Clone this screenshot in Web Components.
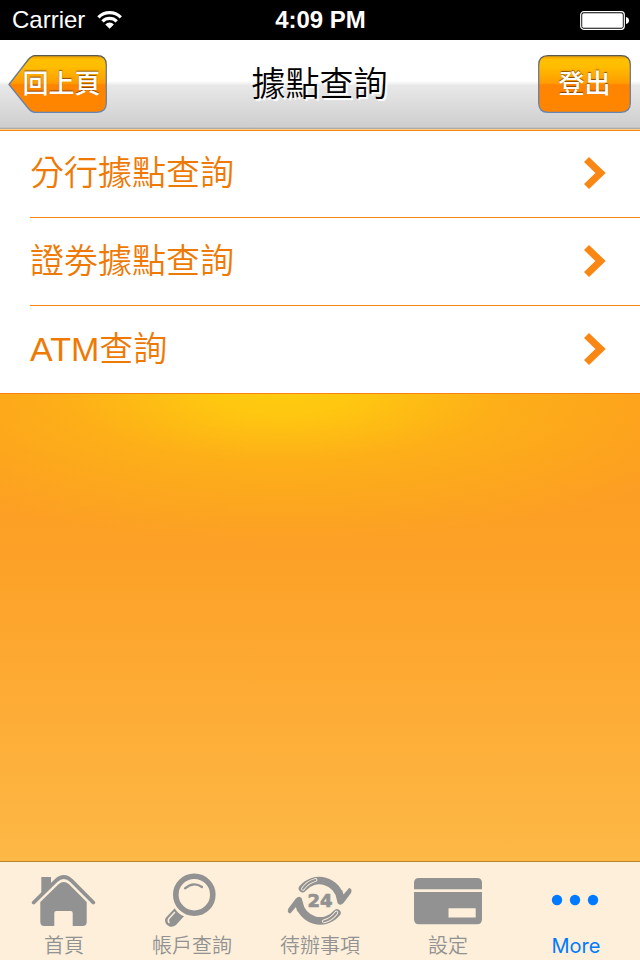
<!DOCTYPE html>
<html lang="zh-Hant">
<head>
<meta charset="utf-8">
<meta name="viewport" content="width=device-width, initial-scale=1">
<title>據點查詢</title>
<style>
  html, body { height: 100%; margin: 0; }
  body {
    --accent: #f78310;
    --accent-text: #ee7a05;
    --tab-bg: #fdefda;
    --tab-ink: #929292;
    --tab-active: #007aff;
    font-family: 'Liberation Sans', 'Noto Sans CJK TC', sans-serif;
    font-weight: 350;
  }
</style>
</head>
<body>

<bank-screen>
  <status-bar slot="top" carrier="Carrier" time="4:09 PM"></status-bar>
  <nav-header slot="top">
    <nav-button slot="left" shape="back">回上頁</nav-button>
    據點查詢
    <nav-button slot="right">登出</nav-button>
  </nav-header>
  <menu-list>
    <menu-row href="#branch">分行據點查詢</menu-row>
    <menu-row href="#securities">證劵據點查詢</menu-row>
    <menu-row href="#atm">ATM查詢</menu-row>
  </menu-list>
  <tab-bar slot="bottom">
    <tab-item icon="home" href="#home">首頁</tab-item>
    <tab-item icon="search" href="#accounts">帳戶查詢</tab-item>
    <tab-item icon="todo" href="#todo">待辦事項</tab-item>
    <tab-item icon="card" href="#settings">設定</tab-item>
    <tab-item icon="more" href="#more" active>More</tab-item>
  </tab-bar>
</bank-screen>

<script>
/** <bank-screen>: bars at the top and bottom, content over the orange backdrop */
class BankScreen extends HTMLElement {
  constructor() {
    super();
    this.attachShadow({ mode: 'open' }).innerHTML = `
      <style>
        :host { display: flex; flex-direction: column; min-height: 100%; }
        main { flex: 1; display: flex; flex-direction: column; }
        .backdrop {
          flex: 1;
          background:
            radial-gradient(ellipse 75% 150px at 44% 0, #ffca10 0, #ffc710 14%, rgba(253,180,22,0.8) 45%, rgba(253,160,30,0) 100%),
            linear-gradient(#fd991f 0, #fca026 32%, #fda62e 50%, #fdb845 100%);
        }
      </style>
      <slot name="top"></slot>
      <main><slot></slot><div class="backdrop"></div></main>
      <slot name="bottom"></slot>
    `;
  }
}

/** <status-bar carrier time> */
class StatusBar extends HTMLElement {
  constructor() {
    super();
    this.attachShadow({ mode: 'open' });
  }

  connectedCallback() {
    this.shadowRoot.innerHTML = `
      <style>
        :host {
          display: grid; grid-template-columns: 1fr auto 1fr; align-items: center;
          height: 40px; padding: 0 11px 0 12px;
          background: #000; color: #fff; font-size: 24px; line-height: 40px;
        }
        .left { display: flex; align-items: center; gap: 12px; }
        .time { font-weight: 700; }
        .battery { justify-self: end; }
        svg { display: block; }
      </style>
      <div class="left">
        <span>${this.getAttribute('carrier')}</span>
        <svg width="26" height="20" viewBox="0 0 26 20" aria-hidden="true">
          <g fill="none" stroke="#fff" stroke-width="3.2">
            <path d="M1.4 7.3A15.8 15.8 0 0 1 23.8 7.3"/>
            <path d="M5.5 11.4A10 10 0 0 1 19.7 11.4"/>
          </g>
          <path d="M8.3 14.4A6 6 0 0 1 16.9 14.4L12.6 18.8Z" fill="#fff"/>
        </svg>
      </div>
      <span class="time">${this.getAttribute('time')}</span>
      <svg class="battery" width="49" height="20" viewBox="0 0 49 20" aria-hidden="true">
        <rect x=".7" y="1.7" width="43.6" height="17.6" rx="3" fill="none" stroke="#fff" stroke-width="1.2"/>
        <rect x="2.2" y="3.2" width="40.6" height="14.6" rx="1.5" fill="#fff"/>
        <path d="M46 7Q49 7.800 49 10.500T46 14Z" fill="#fff"/>
      </svg>
    `;
  }
}

/** <nav-header>: title in the default slot, buttons in left and right */
class NavHeader extends HTMLElement {
  constructor() {
    super();
    this.attachShadow({ mode: 'open' }).innerHTML = `
      <style>
        :host {
          display: grid; grid-template-columns: 1fr auto 1fr; align-items: center;
          position: relative; box-sizing: border-box; height: 90px; padding: 0 9px 2px 8px;
          border-bottom: 1px solid #ffd08a;
          background: linear-gradient(#fff 46%, #e8e8e8 51%, #cecece 98%, #aaa 99%);
          box-shadow: 0 1px var(--accent);
        }
        h1 {
          margin: 0; font-size: 34px; font-weight: inherit; line-height: 50px;
          color: #000; text-shadow: 2px 2px 1px #fff;
        }
        .right { justify-self: end; }
      </style>
      <div><slot name="left"></slot></div>
      <h1><slot></slot></h1>
      <div class="right"><slot name="right"></slot></div>
    `;
  }
}

/** <nav-button shape="back">: glossy orange button, optionally with an arrow edge */
class NavButton extends HTMLElement {
  constructor() {
    super();
    this.attachShadow({ mode: 'open' });
  }

  connectedCallback() {
    const back = this.getAttribute('shape') === 'back';
    const width = back ? 99 : 93;
    const outline = back
      ? 'M1 29.500L20 5Q23.500 .7 27 .7H89Q98.300 .7 98.300 10V48Q98.300 57.300 89 57.300H27Q23.500 57.300 20 53Z'
      : 'M10 .7H83Q92.300 .7 92.300 10V48Q92.300 57.300 83 57.300H10Q.7 57.300 .7 48V10Q.7 .7 10 .7Z';

    this.shadowRoot.innerHTML = `
      <style>
        :host { display: block; }
        button {
          display: grid; place-items: center; padding: 0; border: 0; background: none;
          color: #fff; font: inherit; font-size: 26px; font-weight: 500; line-height: 58px;
          text-shadow: 0 -1px 1px rgba(90,40,0,0.7); cursor: pointer;
        }
        svg, span { grid-area: 1 / 1; }
        svg { display: block; }
        .back span { padding-left: 8px; }
      </style>
      <button type="button" class="${back ? 'back' : ''}">
        <svg width="${width}" height="58" viewBox="0 0 ${width} 58" aria-hidden="true">
          <defs>
            <linearGradient id="fill" x2="0" y2="1">
              <stop offset="0" stop-color="#e89a00"/>
              <stop offset=".07" stop-color="#ffc000"/>
              <stop offset=".2" stop-color="#ffbc00"/>
              <stop offset=".5" stop-color="#ff9a00"/>
              <stop offset=".51" stop-color="#ff8500"/>
              <stop offset="1" stop-color="#ff8500"/>
            </linearGradient>
            <linearGradient id="edge" x2="0" y2="1">
              <stop offset="0" stop-color="#5c5850"/>
              <stop offset=".2" stop-color="#6d7888"/>
              <stop offset="1" stop-color="#6484b4"/>
            </linearGradient>
          </defs>
          <path d="${outline}" fill="url(#fill)" stroke="url(#edge)" stroke-width="1.3"/>
        </svg>
        <span><slot></slot></span>
      </button>
    `;
  }
}

/** <menu-list>: wraps <menu-row> items */
class MenuList extends HTMLElement {
  constructor() {
    super();
    this.attachShadow({ mode: 'open' }).innerHTML = `
      <style>
        :host { display: block; background: #fff; border-bottom: 1px solid var(--accent); }
      </style>
      <nav><slot></slot></nav>
    `;
  }
}

/** <menu-row href> */
class MenuRow extends HTMLElement {
  constructor() {
    super();
    this.attachShadow({ mode: 'open' });
  }

  connectedCallback() {
    this.shadowRoot.innerHTML = `
      <style>
        :host { display: block; padding-left: 30px; }
        a {
          display: flex; align-items: center; justify-content: space-between;
          box-sizing: border-box; height: 88px; padding: 0 34px 2px 0;
          border-bottom: 1px solid var(--accent);
          color: var(--accent-text); font-size: 34px; line-height: 50px; text-decoration: none;
        }
        :host(:last-child) a { height: 87px; border-bottom: 0; }
        svg { display: block; }
      </style>
      <a href="${this.getAttribute('href')}">
        <slot></slot>
        <svg width="22" height="34" viewBox="0 0 22 34" aria-hidden="true">
          <path d="M2.500 3.500L16.500 17L2.500 30.500" fill="none" stroke="#fa8614" stroke-width="7.200"/>
        </svg>
      </a>
    `;
  }
}

/** <tab-bar>: equal columns of <tab-item> */
class TabBar extends HTMLElement {
  constructor() {
    super();
    this.attachShadow({ mode: 'open' }).innerHTML = `
      <style>
        :host { display: block; border-top: 1px solid #b8842e; background: var(--tab-bg); }
        nav { display: grid; grid-auto-flow: column; grid-auto-columns: 1fr; }
      </style>
      <nav><slot></slot></nav>
    `;
  }
}

const ICONS = {
  home: `
    <path d="M9.700 30.500L32 8.700Q40 1.500 47.500 8.700L69.300 30.500" fill="none" stroke="currentColor" stroke-width="3.800" stroke-linecap="round"/>
    <path d="M17.300 5H27V13L17.300 22.500Z"/>
    <path d="M16.300 30L34.500 12.300Q39.700 7.500 45 12.300L62.700 30V50Q62.700 54 58.700 54H48.700V41Q48.700 39 46.700 39H32.300Q30.300 39 30.300 41V54H20.300Q16.300 54 16.300 50Z"/>`,
  search: `
    <circle cx="42.300" cy="22.700" r="18.500" fill="none" stroke="currentColor" stroke-width="5.600"/>
    <path d="M33 16.300Q41.500 9 50 15" fill="none" stroke="currentColor" stroke-width="2.200" stroke-linecap="round"/>
    <path d="M22.700 36.300Q26 42 32 44.300L24 53Q21 55.500 17.500 54.500Q13 52.500 13 48Q13 46.500 14.500 45Z"/>
    <path d="M22.500 40.500L17 46.500Q15.500 48.300 17 50.500" fill="none" stroke="var(--tab-bg)" stroke-width="1.500" stroke-linecap="round"/>`,
  todo: `
    <g id="half">
      <path d="M22.500 16.500A21.500 21.500 0 0 1 60.500 27" fill="none" stroke="currentColor" stroke-width="7.600" stroke-linecap="round"/>
      <path d="M57 20L68 15.500Q73 16.500 71 21L63.500 31Q60 34.500 57.500 31Z"/>
      <path d="M64 12L69.500 15.500L63.500 22.500L61.500 16Z" fill="var(--tab-bg)"/>
      <path d="M23 16.800A21.500 21.500 0 0 1 35.500 8" fill="none" stroke="var(--tab-bg)" stroke-width="3.800" stroke-linecap="round"/>
      <path d="M23 16.800A21.500 21.500 0 0 1 35.500 8" fill="none" stroke="currentColor" stroke-width="2" stroke-linecap="round"/>
    </g>
    <use href="#half" transform="rotate(180 39.700 28.700)"/>
    <text x="40" y="34.700" text-anchor="middle" font-family="DejaVu Sans" font-size="18" font-weight="700" stroke="currentColor" stroke-width=".7">24</text>`,
  card: `
    <path d="M11 6H69Q74 6 74 11V17.300H6V11Q6 6 11 6Z"/>
    <path fill-rule="evenodd" d="M6 20H74V47.300Q74 52.300 69 52.300H11Q6 52.300 6 47.300ZM40.500 36.300V45.500H67.700V36.300Z"/>`,
  more: `
    <circle cx="21" cy="28" r="5.200"/><circle cx="39" cy="28" r="5.200"/><circle cx="57" cy="28" r="5.200"/>`
};

/** <tab-item icon href active> */
class TabItem extends HTMLElement {
  constructor() {
    super();
    this.attachShadow({ mode: 'open' });
  }

  connectedCallback() {
    this.shadowRoot.innerHTML = `
      <style>
        :host { display: block; color: var(--tab-ink); }
        :host([active]) { color: var(--tab-active); font-family: Inter, sans-serif; font-weight: 400; }
        a {
          display: flex; flex-direction: column; align-items: center; gap: 6px;
          height: 88px; padding-top: 10px;
          color: inherit; font-size: 20px; line-height: 24px; text-decoration: none;
        }
        svg { display: block; fill: currentColor; }
      </style>
      <a href="${this.getAttribute('href')}">
        <svg width="80" height="56" viewBox="0 0 80 56" aria-hidden="true">${ICONS[this.getAttribute('icon')]}</svg>
        <span><slot></slot></span>
      </a>
    `;
  }
}

customElements.define('bank-screen', BankScreen);
customElements.define('status-bar', StatusBar);
customElements.define('nav-header', NavHeader);
customElements.define('nav-button', NavButton);
customElements.define('menu-list', MenuList);
customElements.define('menu-row', MenuRow);
customElements.define('tab-bar', TabBar);
customElements.define('tab-item', TabItem);
</script>
</body>
</html>
